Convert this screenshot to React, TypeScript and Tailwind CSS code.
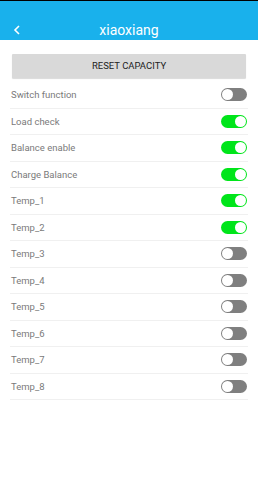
const rows: { label: string; on: boolean }[] = [
  { label: 'Switch function', on: false },
  { label: 'Load check', on: true },
  { label: 'Balance enable', on: true },
  { label: 'Charge Balance', on: true },
  { label: 'Temp_1', on: true },
  { label: 'Temp_2', on: true },
  { label: 'Temp_3', on: false },
  { label: 'Temp_4', on: false },
  { label: 'Temp_5', on: false },
  { label: 'Temp_6', on: false },
  { label: 'Temp_7', on: false },
  { label: 'Temp_8', on: false },
];

function Toggle({ on }: { on: boolean }) {
  return (
    <div
      className={`flex h-[13px] w-[26px] items-center rounded-full px-px ${
        on ? 'justify-end bg-[#00e51a]' : 'justify-start bg-[#7f7f7f]'
      }`}
    >
      <div className="h-[11px] w-[11px] rounded-full bg-white" />
    </div>
  );
}

export default function App() {
  return (
    <div className="h-[500px] w-[258px] bg-white font-['Roboto',sans-serif]">
      {/* Header */}
      <div className="h-px bg-black" />
      <div className="relative flex h-[39px] items-start justify-center bg-[#19b1ec] pt-[20px]">
        <svg
          className="absolute left-[13px] top-[24px]"
          width="8"
          height="10"
          viewBox="0 0 8 10"
          fill="none"
        >
          <path d="M6 1 L2 5 L6 9" stroke="white" strokeWidth="1.6" />
        </svg>
        <span className="text-[14px] leading-[18px] text-white">xiaoxiang</span>
      </div>

      {/* Reset */}
      <div className="px-[12px] pt-[14px]">
        <button className="flex h-[24px] w-full items-center justify-center rounded-[1px] bg-[#d9d9d9] text-[9.5px] text-[#222] shadow-[0_1px_1px_rgba(0,0,0,0.15)]">
          RESET CAPACITY
        </button>
      </div>

      {/* Settings list */}
      <div className="mx-[10px] mt-[4px]">
        {rows.map((r) => (
          <div
            key={r.label}
            className="flex h-[26.5px] items-center justify-between border-b border-[#f0f0f0] pr-[1px]"
          >
            <span className="pl-px pt-px text-[9.5px] text-[#7a7a7a]">{r.label}</span>
            <Toggle on={r.on} />
          </div>
        ))}
      </div>
    </div>
  );
}
